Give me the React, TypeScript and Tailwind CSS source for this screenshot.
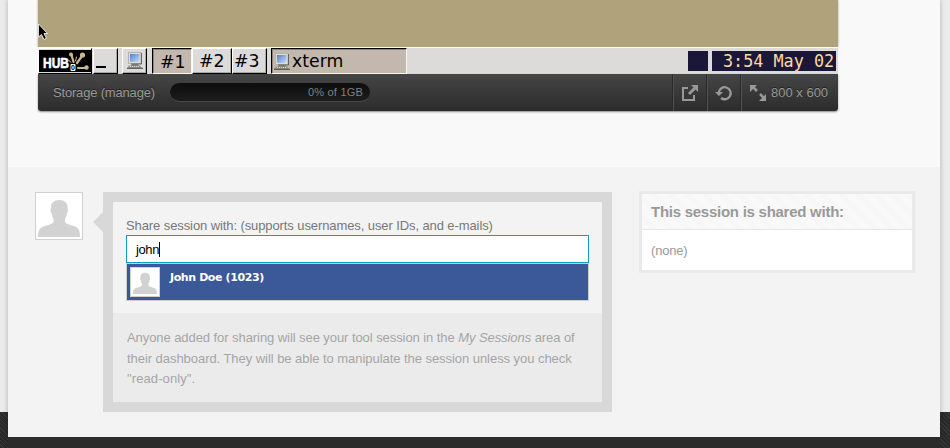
import React from "react";

function Avatar({ className }: { className: string }) {
  return (
    <div className={`shrink-0 border border-[#d0d0d0] bg-white p-[2px] ${className}`}>
      <svg viewBox="0 0 42 42" className="block h-full w-full" fill="#d2d2d2">
        <path d="M13 13C12.500 8 16 5 21.200 5S30 8 29.500 13C30.500 14.500 29.500 18 28.700 18.500C28.500 21 28 22.500 27 24V27C30 30.500 35 30 39 32.500C41.500 34.500 42 38 42 42H0C0 38 .5 34.500 3.500 32.500C7.500 30 12.500 30.500 15.500 27V24C14.500 22.500 14 21 13.800 18.500C13 18 12 14.500 13 13Z" />
      </svg>
    </div>
  );
}

function Computer() {
  return (
    <svg width="16" height="17" viewBox="0 0 16 17" className="shrink-0">
      <defs>
        <linearGradient id="screen" x1="0" y1="0" x2="1" y2="1">
          <stop offset="0" stopColor="#4f7fd0" />
          <stop offset="1" stopColor="#c9dcf8" />
        </linearGradient>
      </defs>
      <rect x="1.500" y="0.500" width="12.500" height="11" fill="#dedfd8" stroke="#b2b2ac" />
      <rect x="3" y="2" width="9.500" height="8" fill="url(#screen)" />
      <path d="M14.500 1V12H4" fill="none" stroke="#62625e" />
      <path d="M5 12H11L12 14H4Z" fill="#777772" />
      <path d="M2 13.500H13L15.500 16.500H0Z" fill="#96968f" />
      <path d="M3 14.500H13" stroke="#d5d5cf" strokeDasharray="1 1" />
      <path d="M0 16.300H16" stroke="#4d4d49" />
    </svg>
  );
}

function HubLogo() {
  return (
    <svg width="52" height="22" viewBox="0 0 52 22" className="shrink-0 bg-black">
      <g stroke="#c9b993" strokeWidth="2.200" strokeLinecap="round">
        <path d="M34.500 12L32.500 5M38 13L43 6M39 18H47" />
        <path d="M29.500 10L32 12.500M36.500 11L37.500 7" strokeWidth="1" />
      </g>
      <g fill="#c9b993">
        <circle cx="32" cy="4.500" r="2" />
        <circle cx="43.500" cy="5" r="2.600" />
        <circle cx="47.500" cy="17.500" r="2.200" />
      </g>
      <text x="4" y="17.500" fontFamily="Liberation Sans, sans-serif" fontWeight="bold" fontSize="15" textLength="26" lengthAdjust="spacingAndGlyphs" stroke="#fff" strokeWidth=".6" fill="#fff">HUB</text>
      <rect x="31.500" y="14" width="5" height="7" rx="1" fill="#fff" />
      <text x="32.100" y="20" fontFamily="Liberation Sans, sans-serif" fontWeight="bold" fontSize="7" fill="#000">0</text>
    </svg>
  );
}

const raised = "border border-t-white border-l-white border-r-black border-b-black shadow-[inset_-1px_-1px_#aaa9a7]";
const sunken = "border border-t-black border-l-black border-r-[#fff5e8] border-b-[#fff5e8] bg-[#c2b8ae] shadow-[inset_1px_1px_#8b837c]";

function Taskbar() {
  return (
    <div className="flex h-[27px] border-t border-white bg-[#dcdbd9] font-['DejaVu_Sans',sans-serif] text-[17.3px] leading-[25px] text-black">
      <div className="flex h-[26px] w-[54px] shrink-0 border border-white border-r-black border-b-black bg-[#dcdbd9] pt-px"><HubLogo /></div>
      <div className={`ml-px flex h-[26px] w-[25px] items-end pb-[5px] pl-[2px] ${raised}`}><i className="h-[2px] w-[10px] bg-black" /></div>
      <div className={`ml-1 flex h-[26px] w-[25px] justify-center pt-[3px] ${raised}`}><Computer /></div>
      <div className={`ml-[5px] h-[26px] w-[40px] pt-px pl-[7px] ${sunken}`}>#1</div>
      <div className={`h-[26px] w-[40px] pl-[6px] ${raised}`}>#2</div>
      <div className={`h-[26px] w-[35px] pl-px ${raised}`}>#3</div>
      <div className={`ml-1 flex h-[26px] w-[136px] items-center gap-[2px] pl-[2px] ${sunken}`}><Computer /><span className="pt-px">xterm</span></div>
      <div className="mt-[3px] ml-auto h-5 w-5 bg-[#1b1739]" />
      <div className="mt-[3px] mr-[2px] ml-1 h-5 w-[124px] bg-[#1b1739] pl-[11px] font-['DejaVu_Sans_Mono',monospace] text-[16.8px] leading-[21px] whitespace-nowrap text-[#fed99d]">3:54 May 02</div>
    </div>
  );
}

function Toolbar() {
  const cell = "flex h-full items-center border-l border-[#525252] shadow-[-1px_0_0_#292929]";
  return (
    <div className="flex h-[37px] items-center rounded-b-[3px] bg-linear-to-b from-[#464646] to-[#2c2c2c] text-[13px] text-[#999] shadow-[0_1px_2px_#888]">
      <span className="ml-[15px] w-[117px] tracking-[-0.18px] whitespace-nowrap [text-shadow:0_-1px_#222]">Storage (manage)</span>
      <div className="h-[19px] w-[200px] rounded-full border-b border-[#484848] bg-linear-to-b from-[#0d0d0d] to-[#1d1d1d] pr-[7px] text-right text-[11px] leading-[18px] tracking-[0.2px] text-[#808080]">0% of 1GB</div>
      <div className="ml-auto flex h-full">
        <div className={`${cell} w-[34px] pl-[7px]`}>
          <svg width="18" height="18" viewBox="0 0 18 18" fill="none" stroke="#999" strokeWidth="2">
            <path d="M7 4H2V16H13V11" /><path d="M8 10L14 4" strokeWidth="3" /><path d="M10 1H17V8Z" fill="#999" stroke="none" />
          </svg>
        </div>
        <div className={`${cell} w-[34px] pl-[7px]`}>
          <svg width="18" height="18" viewBox="0 0 18 18" fill="none" stroke="#999" strokeWidth="2.300">
            <path d="M3.700 8.500A6 6 0 1 1 6 14" /><path d="M0 8H8L4 12Z" fill="#999" stroke="none" />
          </svg>
        </div>
        <div className={`${cell} w-[97px] gap-[4px] pl-2`}>
          <svg width="17" height="18" viewBox="0 0 17 18" fill="none" stroke="#999" strokeWidth="2.500">
            <path d="M3 3L7 7M10 10L14 14" /><path d="M0 1H7L0 8ZM16 10V17H9Z" fill="#999" stroke="none" />
          </svg>
          <span className="whitespace-nowrap [text-shadow:0_-1px_#222]">800 x 600</span>
        </div>
      </div>
    </div>
  );
}

export default function App() {
  return (
    <div className="relative flex h-[448px] w-[950px] flex-col overflow-hidden bg-[linear-gradient(#ebebeb_412px,transparent_412px),repeating-linear-gradient(45deg,#292929_0px,#292929_2px,#363636_2px,#363636_3px)] font-['Liberation_Sans',Arial,sans-serif]">
      <main className="mr-[10px] ml-2 h-[437px] shrink-0 bg-[#f3f3f3] shadow-[0_0_5px_rgba(0,0,0,0.25)]">
        <section className="h-[167px] bg-[#f9f9f9] px-[30px]">
          <div className="w-[800px]">
            <div className="h-[47px] bg-[#b0a27b] shadow-[0_0_2px_#999]" />
            <Taskbar />
            <Toolbar />
          </div>
        </section>
        <section className="flex items-start pt-[25px] pl-[27px]">
          <Avatar className="h-12 w-12" />
          <div className="mt-5 ml-[10px] h-0 w-0 border-y-[10px] border-r-[10px] border-y-transparent border-r-[#d8d8d8]" />
          <div className="h-[220px] w-[509px] border-[10px] border-[#d8d8d8]">
            <div className="h-[111px] pt-[15px] pl-[13px]">
              <div className="h-[18px] text-[13px] leading-[18px] tracking-[-0.095px] whitespace-nowrap text-[#777]">Share session with: (supports usernames, user IDs, and e-mails)</div>
              <div className="flex h-7 w-[463px] items-center border border-[#149bbd] bg-white pt-px pl-[9px] text-[13px] tracking-[-0.4px] text-black">
                john<i className="h-[15px] w-px bg-black" />
              </div>
              <div className="flex h-[38px] w-[463px] border border-[#ccc] bg-[#3b5998] pt-[3px] pl-[3px]">
                <Avatar className="h-[30px] w-[30px]" />
                <b className="ml-[10px] h-5 font-['DejaVu_Sans',Verdana,sans-serif] text-[11px] leading-[21px] tracking-[-0.4px] whitespace-nowrap text-white">John Doe (1023)</b>
              </div>
            </div>
            <div className="h-[89px] bg-[#ebebeb] pt-[15px] pl-[14px] text-[13px] leading-[20.5px] tracking-[-0.07px] whitespace-nowrap text-[#a5a5a5]">
              <p>Anyone added for sharing will see your tool session in the <em>My Sessions</em> area of</p>
              <p className="tracking-[-0.05px]">their dashboard. They will be able to manipulate the session unless you check</p>
              <p className="tracking-[0.1px]">"read-only".</p>
            </div>
          </div>
          <aside className="-mt-px ml-[27px] h-[82px] w-[276px] border-[3px] border-[#e9e9e9] bg-white text-[#999]">
            <h2 className="h-9 border-b border-[#e7e7e7] bg-[repeating-linear-gradient(45deg,#f9f9f9_0px,#f9f9f9_6px,#f7f7f7_6px,#f7f7f7_12px)] pl-[9px] text-[15px] leading-[36px] font-bold tracking-[-0.26px]">This session is shared with:</h2>
            <p className="pl-[9px] text-[13px] leading-[42px] tracking-[-0.2px]">(none)</p>
          </aside>
        </section>
      </main>
      <footer className="mr-[10px] ml-2 flex-1 bg-[#2b2b2b]" />
      <svg className="absolute top-[23px] left-[38px]" width="11" height="18" viewBox="0 0 11 18">
        <path d="M.5 1V14L3.500 11.500L6 16.500L8.300 15.300L6 10.500H9.500Z" fill="#000" stroke="#fff" strokeWidth=".8" />
      </svg>
    </div>
  );
}
